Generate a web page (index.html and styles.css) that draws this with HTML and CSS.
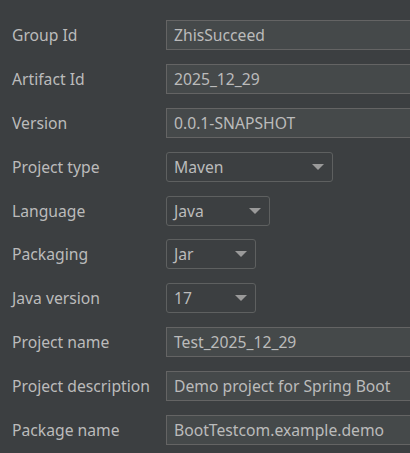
FILE: index.html
```html
<!DOCTYPE html>
<html lang="en">

<head>
  <meta charset="UTF-8">
  <title>New Project</title>
  <link rel="stylesheet" href="styles.css">
</head>

<body>
  <div class="form">
    <div class="label">Group Id</div>
    <div class="field">ZhisSucceed</div>

    <div class="label">Artifact Id</div>
    <div class="field">2025_12_29</div>

    <div class="label">Version</div>
    <div class="field">0.0.1-SNAPSHOT</div>

    <div class="label">Project type</div>
    <div class="combo combo-wide">Maven<span class="arrow"></span></div>

    <div class="label">Language</div>
    <div class="combo combo-mid">Java<span class="arrow"></span></div>

    <div class="label">Packaging</div>
    <div class="combo combo-small">Jar<span class="arrow"></span></div>

    <div class="label">Java version</div>
    <div class="combo combo-small">17<span class="arrow"></span></div>

    <div class="label">Project name</div>
    <div class="field">Test_2025_12_29</div>

    <div class="label">Project description</div>
    <div class="field">Demo project for Spring Boot</div>

    <div class="label">Package name</div>
    <div class="field">BootTestcom.example.demo</div>
  </div>
</body>

</html>
```

FILE: styles.css
```css
body {
  margin: 0;
  background: #3c3f41;
  color: #bbbbbb;
  font-family: "Noto Sans", "Open Sans", sans-serif;
  font-size: 15.7px;
  overflow: hidden;
}

.form {
  display: grid;
  grid-template-columns: 154px minmax(0, 1fr);
  grid-auto-rows: 30px;
  row-gap: 13.9px;
  padding: 20px 0 0 12px;
}

.label {
  display: flex;
  align-items: center;
  white-space: nowrap;
}

.field {
  display: flex;
  align-items: center;
  box-sizing: border-box;
  margin-right: -4px;
  padding-left: 7px;
  background: #45494a;
  border: 1px solid #646464;
  white-space: nowrap;
  overflow: hidden;
}

.combo {
  display: flex;
  align-items: center;
  justify-content: space-between;
  box-sizing: border-box;
  padding: 0 8px 0 7px;
  border: 1px solid #5e6060;
  border-radius: 3px;
}

.combo-wide {
  width: 167px;
}

.combo-mid {
  width: 104px;
}

.combo-small {
  width: 90px;
}

.arrow {
  width: 0;
  height: 0;
  border-left: 6px solid transparent;
  border-right: 6px solid transparent;
  border-top: 6px solid #9a9a9a;
}
```
